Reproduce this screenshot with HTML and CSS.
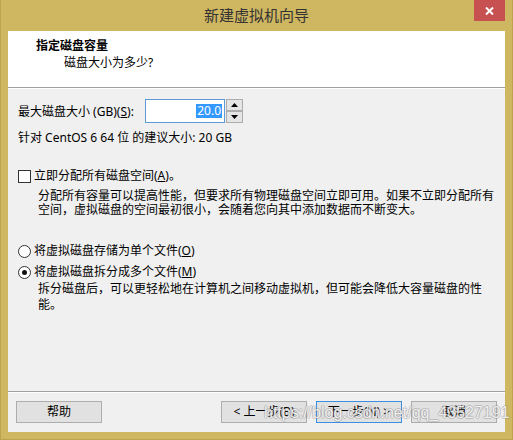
FILE: index.html
```html
<!DOCTYPE html>
<html>
<head>
  <title>新建虚拟机向导</title>
  <link rel="stylesheet" href="styles.css">
</head>
<body>
  <div class="window">
    <div class="titlebar">
      <span></span>
      <div class="title">新建虚拟机向导</div>
      <div class="close">
        <svg width="9" height="8" viewBox="0 0 9 8"><path d="M1 0.5 L8 7.5 M8 0.5 L1 7.5" stroke="#fff" stroke-width="2"/></svg>
      </div>
    </div>

    <div class="client">
      <div class="header">
        <div class="header-title">指定磁盘容量</div>
        <div class="header-sub">磁盘大小为多少?</div>
      </div>

      <div class="content">
        <div class="size-row">
          <label class="size-label">最大磁盘大小 (GB)(<u>S</u>):</label>
          <div class="spin">
            <div class="spin-field"><span class="sel">20.0</span></div>
            <div class="spin-btns">
              <div class="spin-btn"><svg width="7" height="4" viewBox="0 0 7 4"><path d="M3.5 0 L7 4 L0 4 Z" fill="#000"/></svg></div>
              <div class="spin-btn"><svg width="7" height="4" viewBox="0 0 7 4"><path d="M0 0 L7 0 L3.5 4 Z" fill="#000"/></svg></div>
            </div>
          </div>
        </div>

        <div class="hint">针对 CentOS 6 64 位 的建议大小: 20 GB</div>

        <div class="option check-opt"><span class="checkbox"></span>立即分配所有磁盘空间(<u>A</u>)。</div>
        <div class="desc">分配所有容量可以提高性能，但要求所有物理磁盘空间立即可用。如果不立即分配所有<br>空间，虚拟磁盘的空间最初很小，会随着您向其中添加数据而不断变大。</div>

        <div class="option radio-first"><span class="radio"></span>将虚拟磁盘存储为单个文件(<u>O</u>)</div>
        <div class="option radio-second"><span class="radio checked"></span>将虚拟磁盘拆分成多个文件(<u>M</u>)</div>
        <div class="desc desc-split">拆分磁盘后，可以更轻松地在计算机之间移动虚拟机，但可能会降低大容量磁盘的性<br>能。</div>
      </div>

      <div class="footer">
        <button class="btn">帮助</button>
        <div class="footer-right">
          <button class="btn">&lt; 上一步(B)</button>
          <button class="btn btn-default">下一步(N) &gt;</button>
          <button class="btn">取消</button>
        </div>
      </div>
    </div>

    <div class="watermark">https://blog.csdn.net/qq_43527191</div>
  </div>
</body>
</html>
```

FILE: styles.css
```css
body {
  margin: 0;
  padding: 0;
  font-family: "Noto Sans", "Noto Sans CJK SC", sans-serif;
  font-size: 12px;
  color: #000;
}

.window {
  position: relative;
  width: 513px;
  height: 440px;
  box-sizing: border-box;
  padding: 0 8px 8px 8px;
  background-color: #cfb660;
  border: 1px solid #bfa24c;
  border-top: none;
}

.titlebar {
  height: 31px;
  display: grid;
  grid-template-columns: 31px 1fr 31px;
  margin: 0 -1px 0 -1px;
}

.title {
  text-align: center;
  font-size: 15px;
  line-height: 30px;
  color: #333;
}

.close {
  height: 21px;
  background-color: #c75050;
  display: flex;
  justify-content: center;
  align-items: center;
}

.client {
  height: 401px;
  margin: 0 -1px;
  background-color: #f0f0f0;
  display: flex;
  flex-direction: column;
}

.header {
  height: 57px;
  background-color: #fff;
  border-bottom: 1px solid #a0a0a0;
  box-shadow: 0 1px 0 #fff;
  box-sizing: border-box;
  padding-top: 7px;
}

.header-title {
  padding-left: 28px;
  font-weight: bold;
  line-height: 16px;
}

.header-sub {
  padding-left: 56px;
  line-height: 16px;
  margin-top: 1px;
}

.content {
  flex: 1;
  padding: 1px 10px 0 10px;
}

.size-row {
  display: flex;
  align-items: center;
  margin-top: 10px;
}

.size-label {
  width: 127px;
}

.spin {
  display: flex;
  height: 24px;
}

.spin-field {
  width: 80px;
  box-sizing: border-box;
  border: 1px solid #5c9ad8;
  background-color: #fff;
  display: flex;
  justify-content: flex-end;
  align-items: center;
  padding-right: 2px;
}

.sel {
  background-color: #3399ff;
  color: #fff;
  line-height: 14px;
  padding: 0 1px;
}

.spin-btns {
  display: flex;
  flex-direction: column;
  margin-left: 1px;
}

.spin-btn {
  width: 17px;
  height: 12px;
  box-sizing: border-box;
  border: 1px solid #adadad;
  background-color: #e5e5e5;
  display: flex;
  justify-content: center;
  align-items: center;
}

.hint {
  margin-top: 7px;
  line-height: 16px;
}

.option {
  display: flex;
  align-items: center;
  line-height: 16px;
}

.check-opt {
  margin-top: 22px;
}

.checkbox {
  width: 13px;
  height: 13px;
  box-sizing: border-box;
  border: 1px solid #333;
  background-color: #fff;
  margin-right: 3px;
}

.radio {
  width: 13px;
  height: 13px;
  box-sizing: border-box;
  border: 1px solid #333;
  border-radius: 50%;
  background-color: #fff;
  margin-right: 3px;
  display: flex;
  justify-content: center;
  align-items: center;
}

.radio.checked::after {
  content: "";
  width: 5px;
  height: 5px;
  border-radius: 50%;
  background-color: #111;
}

.desc {
  padding-left: 20px;
  line-height: 14px;
  margin-top: 5px;
}

.radio-first {
  margin-top: 26px;
}

.radio-second {
  margin-top: 5px;
}

.desc-split {
  margin-top: 1px;
  line-height: 16px;
}

.footer {
  border-top: 1px solid #a0a0a0;
  box-shadow: inset 0 1px 0 #fff;
  padding: 9px 8px 9px 8px;
  display: flex;
  justify-content: space-between;
}

.footer-right {
  display: flex;
  gap: 9px;
}

.btn {
  width: 86px;
  height: 22px;
  box-sizing: border-box;
  border: 1px solid #adadad;
  background-color: #e1e1e1;
  font-family: "Noto Sans", "Noto Sans CJK SC", sans-serif;
  font-size: 12px;
  color: #000;
  padding: 0;
  line-height: 18px;
}

.btn-default {
  border-color: #3c8ee0;
}

.watermark {
  position: absolute;
  left: 263px;
  top: 404px;
  font-family: "Liberation Sans", Arial, sans-serif;
  font-size: 16px;
  color: rgba(255, 255, 255, 0.85);
  text-shadow: 1px 0 0 rgba(120, 120, 120, 0.35), -1px 0 0 rgba(120, 120, 120, 0.35), 0 1px 0 rgba(120, 120, 120, 0.35), 0 -1px 0 rgba(120, 120, 120, 0.35);
  white-space: nowrap;
}
```
